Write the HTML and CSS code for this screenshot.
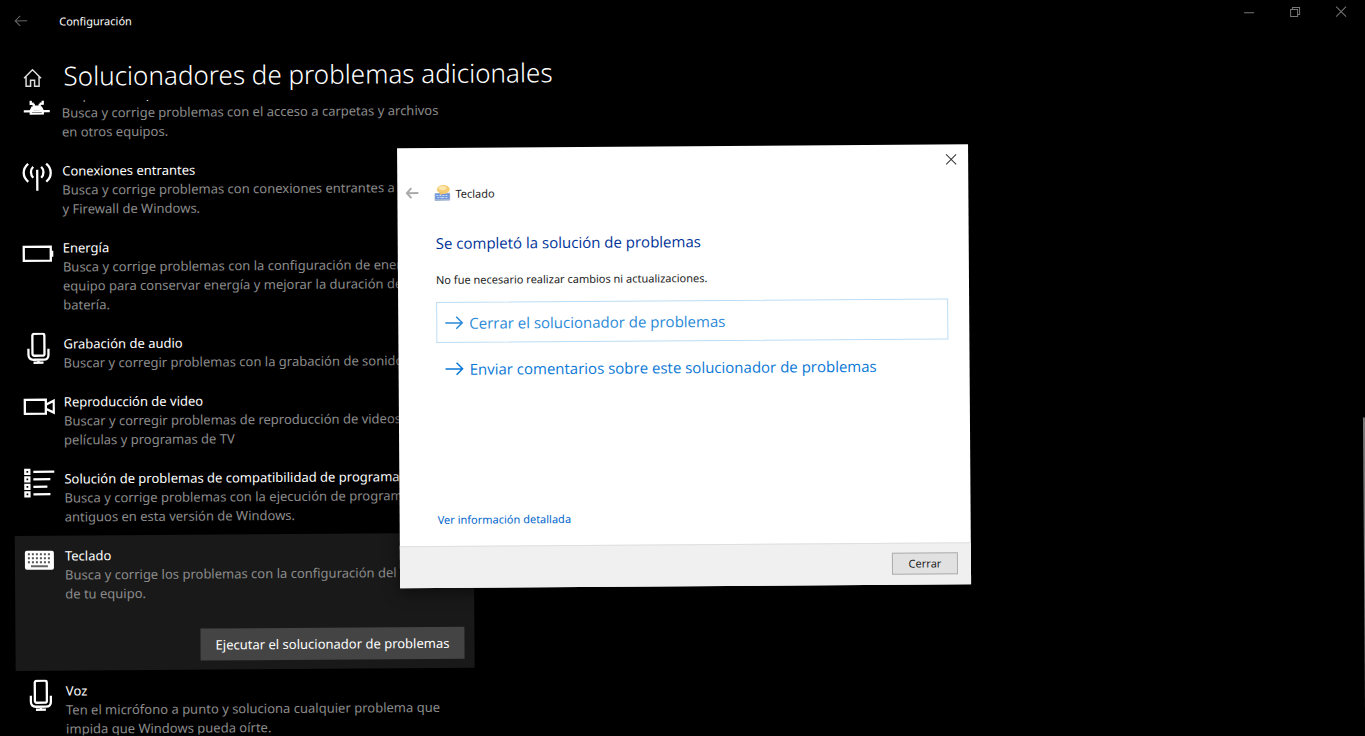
FILE: index.html
```html
<!DOCTYPE html>
<html lang="es">

<head>
    <meta charset="UTF-8">
    <meta name="viewport" content="width=device-width, initial-scale=1.0">
    <title>Configuración</title>
    <link rel="stylesheet" href="styles.css">
</head>

<body>

    <div class="window">

        <header class="titlebar">
            <button type="button" class="back" aria-label="Atrás">
                <svg width="14" height="12" viewBox="0 0 14 12"><path d="M13 6H1M6 1L1 6l5 5" /></svg>
            </button>
            <span class="app-name">Configuración</span>
            <div class="controls">
                <button type="button" aria-label="Minimizar">
                    <svg width="12" height="12" viewBox="0 0 12 12"><path d="M1 6.500h10" /></svg>
                </button>
                <button type="button" aria-label="Restaurar">
                    <svg width="12" height="12" viewBox="0 0 12 12"><path d="M1.500 3.500h7v7h-7zM3.500 3.500v-2h7v7h-2" /></svg>
                </button>
                <button type="button" aria-label="Cerrar ventana">
                    <svg width="12" height="12" viewBox="0 0 12 12"><path d="M1 1l10 10M11 1L1 11" /></svg>
                </button>
            </div>
        </header>

        <div class="page-title">
            <a href="#" class="home" aria-label="Inicio">
                <svg width="20" height="20" viewBox="0 0 20 20"><path d="M1.500 10.500L10 2l8.500 8.500M3.500 8.500v10h4.500v-6h4v6h4.500v-10" /></svg>
            </a>
            <h1>Solucionadores de problemas adicionales</h1>
        </div>

        <main class="scroll">
            <ul class="list">
                <li class="item">
                    <svg class="icon" width="32" height="32" viewBox="0 0 32 32"><path d="M10 4v17h3M22 4v17h-3M13 21v3h6v-3M12 24l-2 4M20 24l2 4M3 28.500h26" /><path d="M10 31v-2l3-3h6l3 3v2z" /></svg>
                    <div class="text">
                        <h2>Carpetas compartidas</h2>
                        <p>Busca y corrige problemas con el acceso a carpetas y archivos<br>en otros equipos.</p>
                    </div>
                </li>
                <li class="item">
                    <svg class="icon" width="32" height="32" viewBox="0 0 32 32"><path d="M16 10v21M12 7c-3 3-3 8 0 11M20 7c3 3 3 8 0 11M7 4C1 9 1 17 7 22M25 4c6 5 6 13 0 18" /></svg>
                    <div class="text">
                        <h2>Conexiones entrantes</h2>
                        <p>Busca y corrige problemas con conexiones entrantes a equipos<br>y Firewall de Windows.</p>
                    </div>
                </li>
                <li class="item">
                    <svg class="icon" width="32" height="32" viewBox="0 0 32 32"><path d="M2 10h27v14H2zM30.500 14v6" /></svg>
                    <div class="text">
                        <h2>Energía</h2>
                        <p>Busca y corrige problemas con la configuración de energía del<br>equipo para conservar energía y mejorar la duración de la<br>batería.</p>
                    </div>
                </li>
                <li class="item">
                    <svg class="icon" width="32" height="32" viewBox="0 0 32 32"><rect x="10" y="1" width="12" height="22" rx="2" /><path d="M6 16v6q0 5 5 5h10q5 0 5-5v-6M16 27v3M11 30h10" /></svg>
                    <div class="text">
                        <h2>Grabación de audio</h2>
                        <p>Buscar y corregir problemas con la grabación de sonido.</p>
                    </div>
                </li>
                <li class="item">
                    <svg class="icon" width="32" height="32" viewBox="0 0 32 32"><path d="M2 9h21v14H2zM23 14l8-4v12l-8-4" /></svg>
                    <div class="text">
                        <h2>Reproducción de video</h2>
                        <p>Buscar y corregir problemas de reproducción de videos,<br>películas y programas de TV</p>
                    </div>
                </li>
                <li class="item">
                    <svg class="icon" width="32" height="32" viewBox="0 0 32 32"><path d="M2 2h4v4H2zM2 9.500h4v4H2zM2 17h4v4H2zM2 24.500h4v4H2zM10 4h21M10 11.500h17M10 19h14M10 26.500h17" /></svg>
                    <div class="text">
                        <h2>Solución de problemas de compatibilidad de programas</h2>
                        <p>Busca y corrige problemas con la ejecución de programas<br>antiguos en esta versión de Windows.</p>
                    </div>
                </li>
                <li class="item selected">
                    <svg class="icon" width="32" height="32" viewBox="0 0 32 32">
                        <rect class="solid" x="1" y="6" width="29" height="19" rx="2" />
                        <path class="keys" d="M4 9.500h24M4 13.500h24M4 17.500h24" />
                        <path class="space" d="M7 21.500h17" />
                    </svg>
                    <div class="text">
                        <h2>Teclado</h2>
                        <p>Busca y corrige los problemas con la configuración del teclado<br>de tu equipo.</p>
                    </div>
                    <button type="button" class="run">Ejecutar el solucionador de problemas</button>
                </li>
                <li class="item">
                    <svg class="icon" width="32" height="32" viewBox="0 0 32 32"><rect x="10" y="1" width="12" height="22" rx="2" /><path d="M6 16v6q0 5 5 5h10q5 0 5-5v-6M16 27v3M11 30h10" /></svg>
                    <div class="text">
                        <h2>Voz</h2>
                        <p>Ten el micrófono a punto y soluciona cualquier problema que<br>impida que Windows pueda oírte.</p>
                    </div>
                </li>
            </ul>
        </main>

        <div class="scrollbar"></div>

        <section class="dialog" role="dialog" aria-labelledby="dialogTitle">
            <button type="button" class="close" aria-label="Cerrar">
                <svg width="12" height="12" viewBox="0 0 12 12"><path d="M1 1l10 10M11 1L1 11" /></svg>
            </button>

            <div class="dialog-header">
                <button type="button" class="dialog-back" aria-label="Atrás">
                    <svg width="14" height="12" viewBox="0 0 14 12"><path d="M13 6H1.500M6 1L1.500 6 6 11" /></svg>
                </button>
                <svg class="app-icon" width="16" height="16" viewBox="0 0 16 16">
                    <rect x="0" y="8" width="16" height="8" rx="1" fill="#9fb2d4" />
                    <rect x="1" y="9" width="14" height="5" fill="#6d95dc" />
                    <path d="M2 10h2v1H2zM5 10h2v1H5zM8 10h2v1H8zM11 10h2v1h-2zM3 12h2v1H3zM6 12h4v1H6zM11 12h2v1h-2z" fill="#c9dcf7" />
                    <ellipse cx="9" cy="4.500" rx="6.500" ry="4.500" fill="#f4cc74" />
                    <ellipse cx="8" cy="3" rx="4" ry="2" fill="#fbe6ac" />
                    <path d="M5 7l1 3 4-2z" fill="#f0c268" />
                </svg>
                <span>Teclado</span>
            </div>

            <div class="dialog-body">
                <h2 id="dialogTitle">Se completó la solución de problemas</h2>
                <p>No fue necesario realizar cambios ni actualizaciones.</p>
                <button type="button" class="option focused">
                    <svg width="20" height="14" viewBox="0 0 20 14"><path d="M1 7h17M12 1l6 6-6 6" /></svg>
                    Cerrar el solucionador de problemas
                </button>
                <button type="button" class="option">
                    <svg width="20" height="14" viewBox="0 0 20 14"><path d="M1 7h17M12 1l6 6-6 6" /></svg>
                    Enviar comentarios sobre este solucionador de problemas
                </button>
                <a href="#" class="details">Ver información detallada</a>
            </div>

            <footer class="dialog-footer">
                <button type="button">Cerrar</button>
            </footer>
        </section>

    </div>

</body>

</html>
```
FILE: styles.css
```css
* {
    box-sizing: border-box;
    margin: 0;
    padding: 0;
}

body {
    font-family: 'Noto Sans', 'Open Sans', sans-serif;
    font-size: 13px;
    background-color: #000;
    color: #fff;
    overflow: hidden;
}

button {
    font: inherit;
    color: inherit;
    background: none;
    border: none;
    cursor: pointer;
}

svg {
    display: block;
    flex: none;
    fill: none;
    stroke: currentColor;
}

/* toda la ventana va un poco inclinada */
.window {
    position: relative;
    display: flex;
    flex-direction: column;
    height: 100vh;
    transform: rotate(-0.4deg);
    transform-origin: 0 0;
}

.titlebar {
    display: flex;
    align-items: center;
    height: 42px;
    padding: 0 1px 0 14px;
    font-size: 11px;
}

.back {
    color: #666;
    width: 45px;
}

.controls {
    display: flex;
    margin-left: auto;
    color: #777;
}

.controls button {
    display: flex;
    justify-content: center;
    align-items: center;
    width: 46px;
    height: 32px;
}

.page-title {
    display: flex;
    align-items: center;
    flex: none;
    height: 59px;
    padding: 12px 0 0 22px;
}

.page-title h1 {
    font-size: 26px;
    font-weight: 300;
    line-height: 36px;
    margin-left: 21px;
    padding-bottom: 3px;
    white-space: nowrap;
}

.home {
    color: #ddd;
}

.home svg {
    stroke-width: 1.5;
}

.scroll {
    flex: 1;
    overflow: hidden;
    padding-left: 11px;
}

.list {
    list-style: none;
    width: 459px;
    margin-top: -27px;
}

.item {
    display: flex;
    flex-wrap: wrap;
    padding: 10px 10px 9px;
}

.icon {
    margin: -1px 9px 0 -1px;
    stroke-width: 2.3;
}

.icon .solid {
    fill: #fff;
    stroke: none;
}

.icon .keys {
    stroke: #555;
    stroke-width: 2;
    stroke-dasharray: 2 2;
}

.icon .space {
    stroke: #666;
    stroke-width: 2;
}

.text {
    flex: 1;
    padding-top: 1px;
    white-space: nowrap;
}

.text h2 {
    font-size: 13px;
    font-weight: 400;
    line-height: 19px;
}

.text p {
    line-height: 19px;
    color: #8c8c8c;
}

.selected {
    background-color: #191919;
}

.run {
    margin: 26px 0 0 auto;
    width: 264px;
    height: 32px;
    background-color: #444;
}

.scrollbar {
    position: absolute;
    top: 427px;
    right: 3px;
    width: 2px;
    height: 300px;
    background-color: #777;
}

.dialog {
    position: absolute;
    top: 151px;
    left: 396px;
    display: flex;
    flex-direction: column;
    width: 571px;
    height: 440px;
    background-color: #fff;
    color: #222;
    font-size: 11px;
    box-shadow: 0 4px 16px rgba(0, 0, 0, 0.5);
}

.close {
    display: flex;
    justify-content: center;
    align-items: center;
    align-self: flex-end;
    width: 34px;
    height: 30px;
    color: #333;
}

.dialog-header {
    display: flex;
    align-items: center;
    height: 30px;
    padding-left: 8px;
}

.dialog-back {
    width: 29px;
    color: #aaa;
}

.dialog-back svg {
    stroke-width: 2;
}

.app-icon {
    stroke: none;
}

.dialog-header span {
    margin-left: 5px;
}

.dialog-body {
    flex: 1;
    display: flex;
    flex-direction: column;
    padding: 24px 21px 16px 38px;
}

.dialog-body h2 {
    font-family: 'Open Sans', sans-serif;
    font-size: 15px;
    font-weight: 400;
    line-height: 22px;
    color: #003399;
}

.dialog-body p {
    line-height: 20px;
    margin: 16px 0 12px;
}

.option {
    display: flex;
    align-items: center;
    gap: 5px;
    height: 41px;
    margin-bottom: 5px;
    padding-left: 7px;
    border: 1px solid transparent;
    font-family: 'Open Sans', sans-serif;
    font-size: 15px;
    color: #0a78d6;
    text-align: left;
}

.option svg {
    stroke-width: 1.5;
}

.option.focused {
    border-color: #bcdcf4;
    color: #2a8ad8;
}

.details {
    margin-top: auto;
    align-self: flex-start;
    line-height: 20px;
    color: #0066cc;
    text-decoration: none;
}

.dialog-footer {
    display: flex;
    justify-content: flex-end;
    align-items: center;
    height: 42px;
    padding: 0 13px 2px 0;
    background-color: #f0f0f0;
    border-top: 1px solid #dfdfdf;
}

.dialog-footer button {
    width: 66px;
    height: 22px;
    background-color: #e1e1e1;
    border: 1px solid #adadad;
}
```
